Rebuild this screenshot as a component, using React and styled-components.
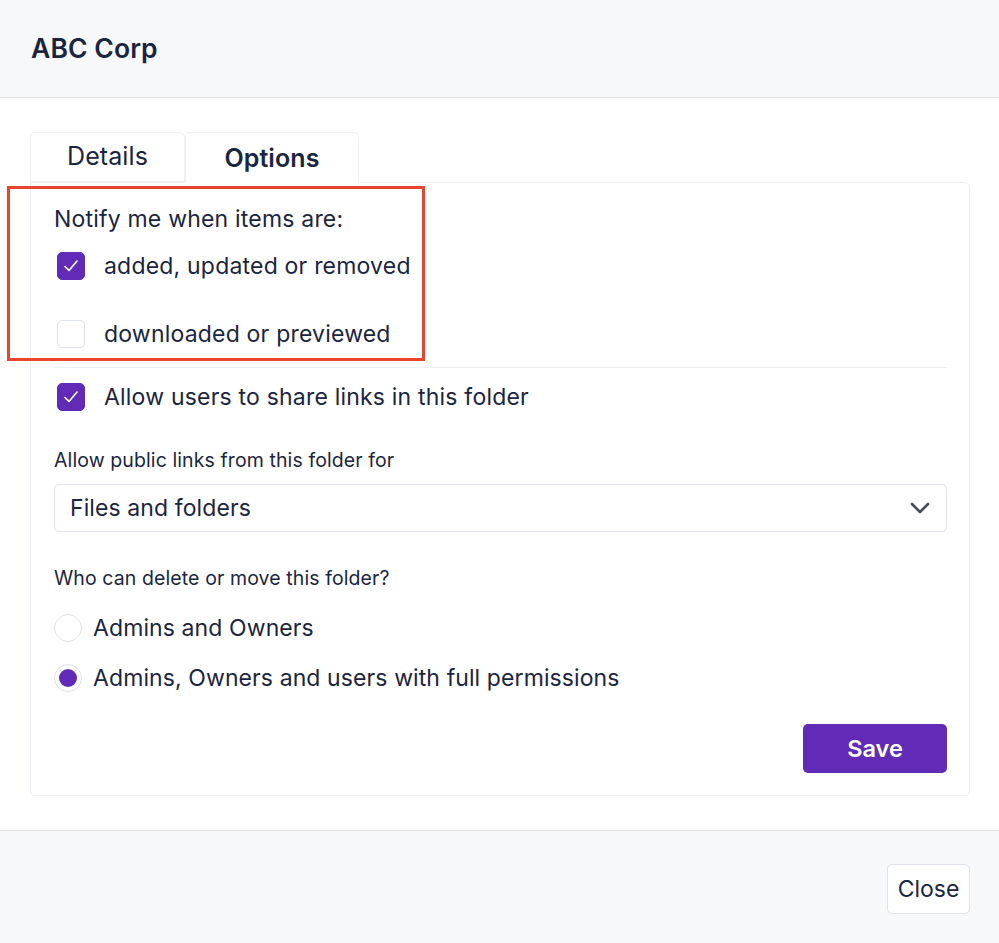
import React from "react";
import styled, { createGlobalStyle } from "styled-components";

const Global = createGlobalStyle`
  html, body { margin: 0; padding: 0; background: #ffffff; }
  body { font-family: Inter, "Noto Sans", sans-serif; color: #1b2540; }
  * { box-sizing: border-box; }
`;

const Dialog = styled.div`
  width: 999px;
  height: 943px;
  display: flex;
  flex-direction: column;
  background: #fff;
`;

const Header = styled.header`
  height: 98px;
  flex: none;
  background: #f7f8fa;
  border-bottom: 1px solid #dfe2ea;
  display: flex;
  align-items: center;
  padding: 0 31px 2px;
`;

const Title = styled.h1`
  margin: 0;
  font-size: 26.5px;
  font-weight: 600;
  color: #1b2540;
  letter-spacing: 0.1px;
`;

const Body = styled.main`
  flex: none;
  padding: 33px 29px 34px 30px;
  border-bottom: 1px solid #dfe2ea;
`;

const Tabs = styled.div`
  display: flex;
  align-items: flex-end;
  height: 51px;
`;

const Tab = styled.div`
  height: ${(p) => (p.$active ? "51px" : "50px")};
  width: ${(p) => p.$w}px;
  display: flex;
  align-items: center;
  justify-content: center;
  font-size: 25px;
  letter-spacing: 0.1px;
  font-weight: ${(p) => (p.$active ? 600 : 400)};
  color: #1b2540;
  border: 1px solid #eef0f4;
  border-bottom: ${(p) => (p.$active ? "1px solid #fff" : "1px solid #eef0f4")};
  border-radius: 5px 5px 0 0;
  background: #fff;
  margin-bottom: ${(p) => (p.$active ? "-1px" : "0")};
  position: relative;
  z-index: ${(p) => (p.$active ? 1 : 0)};
  padding-bottom: ${(p) => (p.$active ? "0" : "2px")};
`;

const Panel = styled.section`
  border: 1px solid #eceef3;
  border-radius: 0 5px 5px 5px;
  padding: 22px 22px 22px 23px;
  display: flex;
  flex-direction: column;
`;

const NotifyGroup = styled.div`
  position: relative;
  display: flex;
  flex-direction: column;
`;

const Highlight = styled.div`
  position: absolute;
  left: -47px;
  top: -19px;
  width: 418px;
  height: 175px;
  border: 3px solid #e8442e;
  pointer-events: none;
`;

const Lead = styled.div`
  font-size: 23px;
  letter-spacing: 0.2px;
  line-height: 28px;
  margin-bottom: 19px;
`;

const CheckRow = styled.label`
  display: flex;
  align-items: center;
  gap: 19px;
  height: 28px;
  font-size: 23px;
  letter-spacing: 0.2px;
  padding-left: 3px;
  margin-bottom: ${(p) => p.$mb || 0}px;
`;

const Box = styled.span`
  width: 28px;
  height: 28px;
  flex: none;
  border-radius: 5px;
  display: flex;
  align-items: center;
  justify-content: center;
  background: ${(p) => (p.$checked ? "#612bb8" : "#fff")};
  border: 1px solid ${(p) => (p.$checked ? "#612bb8" : "#dde1ea")};
`;

const Divider = styled.hr`
  border: none;
  border-top: 1px solid #eceef3;
  margin: 19px 0 15px;
  width: 100%;
`;

const FieldLabel = styled.div`
  font-size: 19.5px;
  letter-spacing: 0.1px;
  line-height: 24px;
  margin-top: ${(p) => p.$mt}px;
  margin-bottom: ${(p) => p.$mb}px;
`;

const Select = styled.div`
  height: 48px;
  border: 1px solid #dfe2ea;
  border-radius: 5px;
  display: flex;
  align-items: center;
  justify-content: space-between;
  padding: 0 15px 0 15px;
  font-size: 23px;
  letter-spacing: 0.1px;
`;

const RadioRow = styled.label`
  display: flex;
  align-items: center;
  gap: 11px;
  height: 28px;
  font-size: 23px;
  letter-spacing: 0.1px;
  margin-bottom: ${(p) => p.$mb || 0}px;
`;

const RadioCircle = styled.span`
  width: 28px;
  height: 28px;
  flex: none;
  border-radius: 50%;
  border: 1.5px solid #dfe2ea;
  background: #fff;
  display: flex;
  align-items: center;
  justify-content: center;
  &::after {
    content: "";
    display: ${(p) => (p.$checked ? "block" : "none")};
    width: 18px;
    height: 18px;
    border-radius: 50%;
    background: #612bb8;
  }
`;

const Actions = styled.div`
  display: flex;
  justify-content: flex-end;
  margin-top: 32px;
`;

const PrimaryButton = styled.button`
  width: 144px;
  height: 49px;
  border: none;
  border-radius: 5px;
  background: #612bb8;
  color: #fff;
  font-family: inherit;
  font-size: 23.5px;
  font-weight: 600;
`;

const Footer = styled.footer`
  flex: 1;
  background: #f7f8fa;
  display: flex;
  justify-content: flex-end;
  align-items: flex-start;
  padding: 33px 29px 0 0;
`;

const SecondaryButton = styled.button`
  width: 83px;
  height: 50px;
  padding: 0;
  background: #fff;
  border: 1.5px solid #dfe2ea;
  border-radius: 5px;
  font-family: inherit;
  font-size: 23px;
  color: #1b2540;
`;

const Check = () => (
  <svg width="18" height="18" viewBox="0 0 18 18" fill="none">
    <polyline points="3,9.5 7,13.5 15,4" stroke="#fff" strokeWidth="1.6" strokeLinecap="round" strokeLinejoin="round" />
  </svg>
);

const Chevron = () => (
  <svg width="22" height="14" viewBox="0 0 22 14" fill="none">
    <polyline points="3,3 11,11 19,3" stroke="#464d5c" strokeWidth="2.6" strokeLinecap="round" strokeLinejoin="round" />
  </svg>
);

const Checkbox = ({ checked, children, mb }) => (
  <CheckRow $mb={mb}>
    <Box $checked={checked}>{checked && <Check />}</Box>
    <span>{children}</span>
  </CheckRow>
);

const Radio = ({ checked, children, mb }) => (
  <RadioRow $mb={mb}>
    <RadioCircle $checked={checked} />
    <span>{children}</span>
  </RadioRow>
);

export default function App() {
  return (
    <>
      <Global />
      <Dialog>
        <Header>
          <Title>ABC Corp</Title>
        </Header>
        <Body>
          <Tabs>
            <Tab $w={155}>Details</Tab>
            <Tab $w={174} $active>Options</Tab>
          </Tabs>
          <Panel>
            <NotifyGroup>
              <Highlight />
              <Lead>Notify me when items are:</Lead>
              <Checkbox checked mb={40}>added, updated or removed</Checkbox>
              <Checkbox>downloaded or previewed</Checkbox>
            </NotifyGroup>
            <Divider />
            <Checkbox checked>Allow users to share links in this folder</Checkbox>
            <FieldLabel $mt={37} $mb={12}>Allow public links from this folder for</FieldLabel>
            <Select>
              <span>Files and folders</span>
              <Chevron />
            </Select>
            <FieldLabel $mt={34} $mb={24}>Who can delete or move this folder?</FieldLabel>
            <Radio mb={22}>Admins and Owners</Radio>
            <Radio checked>Admins, Owners and users with full permissions</Radio>
            <Actions>
              <PrimaryButton>Save</PrimaryButton>
            </Actions>
          </Panel>
        </Body>
        <Footer>
          <SecondaryButton>Close</SecondaryButton>
        </Footer>
      </Dialog>
    </>
  );
}
